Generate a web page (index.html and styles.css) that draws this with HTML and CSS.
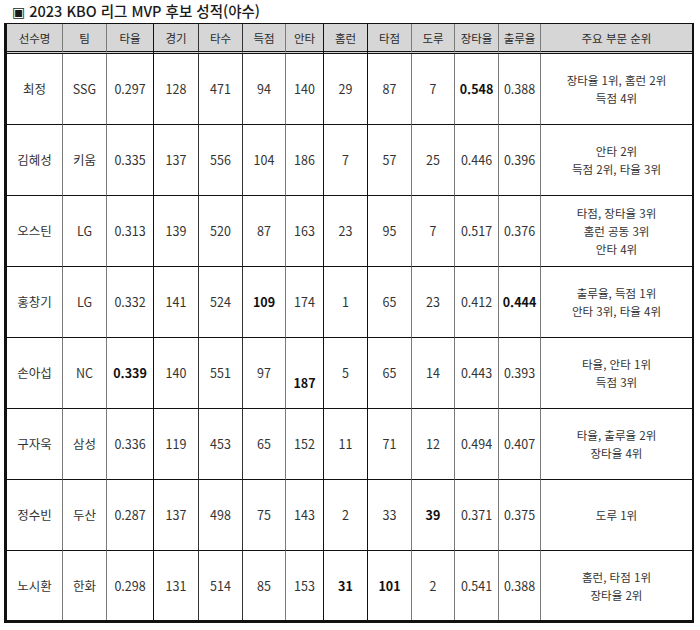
FILE: index.html
```html
<!DOCTYPE html>
<html lang="ko">
<head>
<meta charset="utf-8">
<title>2023 KBO 리그 MVP 후보 성적(야수)</title>
<link rel="stylesheet" href="styles.css">
</head>
<body>
<div class="title"><span class="mark">▣</span> 2023 KBO 리그 MVP 후보 성적(야수)</div>
<table class="stats">
<colgroup>
<col class="c1"><col class="c2"><col class="c3"><col class="c4"><col class="c5"><col class="c6"><col class="c7"><col class="c8"><col class="c9"><col class="c10"><col class="c11"><col class="c12"><col class="c13">
</colgroup>
<thead>
<tr>
<th class="g">선수명</th><th class="g">팀</th><th class="k">타율</th><th class="d">경기</th><th class="d">타수</th><th class="g">득점</th><th class="k">안타</th><th class="k">홈런</th><th class="g">타점</th><th class="g">도루</th><th class="g">장타율</th><th class="g">출루율</th><th class="last">주요 부문 순위</th>
</tr>
</thead>
<tbody>
<tr>
<td class="g">최정</td><td class="g">SSG</td><td class="k">0.297</td><td class="d">128</td><td class="d">471</td><td class="g">94</td><td class="k">140</td><td class="k">29</td><td class="g">87</td><td class="g">7</td><td class="g b">0.548</td><td class="g">0.388</td><td class="last">장타율 1위, 홈런 2위<br>득점 4위</td>
</tr>
<tr>
<td class="g">김혜성</td><td class="g">키움</td><td class="k">0.335</td><td class="d">137</td><td class="d">556</td><td class="g">104</td><td class="k">186</td><td class="k">7</td><td class="g">57</td><td class="g">25</td><td class="g">0.446</td><td class="g">0.396</td><td class="last">안타 2위<br>득점 2위, 타율 3위</td>
</tr>
<tr>
<td class="g">오스틴</td><td class="g">LG</td><td class="k">0.313</td><td class="d">139</td><td class="d">520</td><td class="g">87</td><td class="k">163</td><td class="k">23</td><td class="g">95</td><td class="g">7</td><td class="g">0.517</td><td class="g">0.376</td><td class="last">타점, 장타율 3위<br>홈런 공동 3위<br>안타 4위</td>
</tr>
<tr>
<td class="g">홍창기</td><td class="g">LG</td><td class="k">0.332</td><td class="d">141</td><td class="d">524</td><td class="g b">109</td><td class="k">174</td><td class="k">1</td><td class="g">65</td><td class="g">23</td><td class="g">0.412</td><td class="g b">0.444</td><td class="last">출루율, 득점 1위<br>안타 3위, 타율 4위</td>
</tr>
<tr>
<td class="g">손아섭</td><td class="g">NC</td><td class="k b">0.339</td><td class="d">140</td><td class="d">551</td><td class="g">97</td><td class="k b low">187</td><td class="k">5</td><td class="g">65</td><td class="g">14</td><td class="g">0.443</td><td class="g">0.393</td><td class="last">타율, 안타 1위<br>득점 3위</td>
</tr>
<tr>
<td class="g">구자욱</td><td class="g">삼성</td><td class="k">0.336</td><td class="d">119</td><td class="d">453</td><td class="g">65</td><td class="k">152</td><td class="k">11</td><td class="g">71</td><td class="g">12</td><td class="g">0.494</td><td class="g">0.407</td><td class="last">타율, 출루율 2위<br>장타율 4위</td>
</tr>
<tr>
<td class="g">정수빈</td><td class="g">두산</td><td class="k">0.287</td><td class="d">137</td><td class="d">498</td><td class="g">75</td><td class="k">143</td><td class="k">2</td><td class="g">33</td><td class="g b">39</td><td class="g">0.371</td><td class="g">0.375</td><td class="last">도루 1위</td>
</tr>
<tr class="end">
<td class="g">노시환</td><td class="g">한화</td><td class="k">0.298</td><td class="d">131</td><td class="d">514</td><td class="g">85</td><td class="k">153</td><td class="k b">31</td><td class="g b">101</td><td class="g">2</td><td class="g">0.541</td><td class="g">0.388</td><td class="last">홈런, 타점 1위<br>장타율 2위</td>
</tr>
</tbody>
</table>
</body>
</html>
```
FILE: styles.css
```css
html, body {
  margin: 0;
  padding: 0;
  background: #ffffff;
}

body {
  font-family: "Noto Sans CJK KR", "Noto Sans", sans-serif;
  color: #333333;
}

.title {
  height: 23px;
  line-height: 22px;
  padding-left: 12px;
  font-size: 14.5px;
  font-weight: 500;
  color: #1a1a1a;
  white-space: nowrap;
}

.mark {
  font-family: "DejaVu Sans", sans-serif;
  font-size: 14px;
}

.stats {
  margin-left: 4px;
  width: 690px;
  box-sizing: border-box;
  table-layout: fixed;
  border-collapse: separate;
  border-spacing: 0;
  border-top: 1px solid #111111;
  border-left: 3px solid #111111;
  border-right: 2px solid #111111;
  border-bottom: 3px solid #111111;
}

.c1 { width: 56px; }
.c2 { width: 44px; }
.c3 { width: 47px; }
.c4 { width: 45px; }
.c5 { width: 44px; }
.c6 { width: 43px; }
.c7 { width: 38px; }
.c8 { width: 44px; }
.c9 { width: 44px; }
.c10 { width: 43px; }
.c11 { width: 44px; }
.c12 { width: 42px; }
.c13 { width: 151px; }

.stats th,
.stats td {
  box-sizing: border-box;
  padding: 0;
  text-align: center;
  vertical-align: middle;
  white-space: nowrap;
  overflow: visible;
}

.stats th {
  height: 30px;
  background: #d6d6d6;
  font-size: 11.5px;
  font-weight: 400;
  color: #2a2a2a;
  border-bottom: 3px double #111111;
}

.stats td {
  height: 71px;
  font-size: 12.5px;
  font-weight: 400;
  color: #333333;
  border-bottom: 1px solid #111111;
  line-height: 18px;
}

.stats tr.end td {
  border-bottom: none;
  height: 69px;
}

.stats .g { border-right: 1px solid #7a7a7a; }
.stats .k { border-right: 1px solid #111111; }
.stats .d { border-right: 1px solid #333333; }
.stats td.last { font-size: 11.5px; }

.stats td.b {
  font-weight: 600;
  color: #111111;
}

.stats td.low {
  padding-top: 20px;
}
```
